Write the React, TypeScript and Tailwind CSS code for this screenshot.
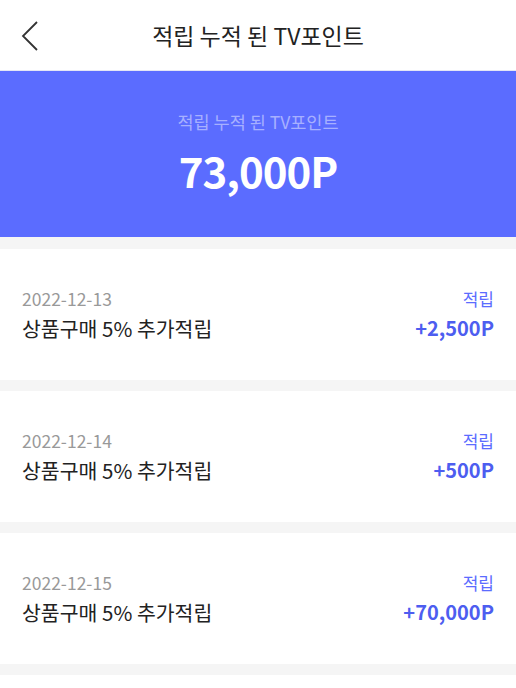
import React from 'react';

const items = [
  { date: '2022-12-13', title: '상품구매 5% 추가적립', type: '적립', amount: '+2,500P' },
  { date: '2022-12-14', title: '상품구매 5% 추가적립', type: '적립', amount: '+500P' },
  { date: '2022-12-15', title: '상품구매 5% 추가적립', type: '적립', amount: '+70,000P' },
];

const App: React.FC = () => {
  return (
    <div
      className="min-h-screen bg-white"
      style={{ fontFamily: '"Noto Sans CJK KR", "Noto Sans", sans-serif' }}
    >
      {/* Header */}
      <div className="relative h-[71px] flex items-center justify-center border-b border-[#e4e6f5]">
        <button className="absolute left-[18px] top-[20px] w-[24px] h-[32px] flex items-center justify-center">
          <svg width="20" height="32" viewBox="0 0 20 32" fill="none">
            <path d="M17 2 L3 16 L17 30" stroke="#333" strokeWidth="1.8" strokeLinejoin="miter" />
          </svg>
        </button>
        <h1 className="text-[23px] text-[#222] leading-none">적립 누적 된 TV포인트</h1>
      </div>

      {/* Summary banner */}
      <div className="h-[166px] bg-[#5b6cff] flex flex-col items-center justify-center">
        <p className="text-[17.5px] text-[#a7b0ff] leading-none -mt-[4px]">적립 누적 된 TV포인트</p>
        <p className="text-[42px] font-bold text-white leading-none mt-[18px] tracking-[-1px]">73,000P</p>
      </div>

      {/* History */}
      <div className="bg-[#f5f5f5] pt-[12px] pb-[11px] flex flex-col gap-[11px]">
        {items.map((item, i) => (
          <div key={i} className="bg-white h-[131px] px-[22px] flex items-center justify-between">
            <div className="flex flex-col -mt-[1px]">
              <span className="text-[17.5px] text-[#999] leading-none">{item.date}</span>
              <span className="text-[20.5px] text-[#222] leading-none mt-[11px]">{item.title}</span>
            </div>
            <div className="flex flex-col items-end -mt-[1px]">
              <span className="text-[17px] text-[#5b6cff] leading-none">{item.type}</span>
              <span className="text-[20px] font-bold text-[#4d5df0] leading-none mt-[11px]">{item.amount}</span>
            </div>
          </div>
        ))}
      </div>
    </div>
  );
};

export default App;
